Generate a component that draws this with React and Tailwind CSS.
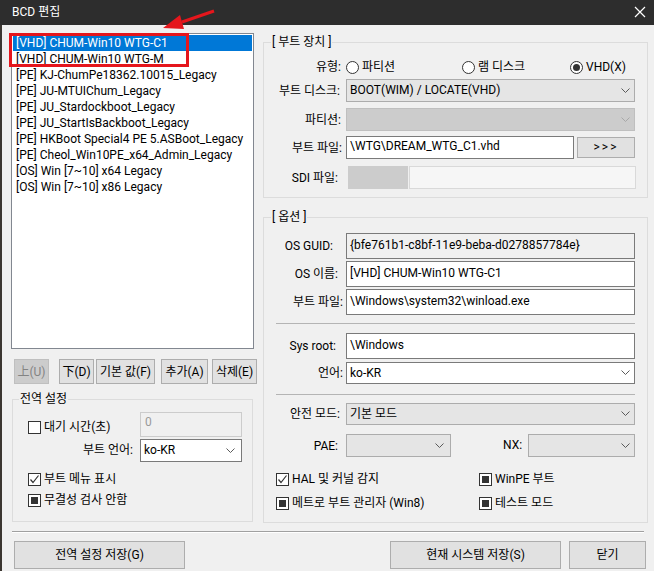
import React from 'react';

const items = [
  '[VHD] CHUM-Win10 WTG-C1',
  '[VHD] CHUM-Win10 WTG-M',
  '[PE] KJ-ChumPe18362.10015_Legacy',
  '[PE] JU-MTUIChum_Legacy',
  '[PE] JU_Stardockboot_Legacy',
  '[PE] JU_StartIsBackboot_Legacy',
  '[PE] HKBoot Special4 PE 5.ASBoot_Legacy',
  '[PE] Cheol_Win10PE_x64_Admin_Legacy',
  '[OS] Win [7~10] x64 Legacy',
  '[OS] Win [7~10] x86 Legacy',
];

function Btn({ children, className = '', disabled }) {
  return (
    <div
      className={`flex items-center justify-center border ${
        disabled ? 'bg-[#cccccc] border-[#bfbfbf] text-[#838383]' : 'bg-[#e1e1e1] border-[#adadad] text-black'
      } ${className}`}
    >
      {children}
    </div>
  );
}

function Chevron({ light }) {
  return (
    <svg width="9" height="6" viewBox="0 0 9 6" className="shrink-0">
      <polyline points="0.5,0.5 4.5,4.5 8.5,0.5" fill="none" stroke={light ? '#a8a8a8' : '#5a5a5a'} strokeWidth="1" />
    </svg>
  );
}

function Combo({ value, disabled, white, className = '', chevPad = 'pr-[4px]' }) {
  const look = disabled
    ? 'bg-[#cccccc] border-[#bfbfbf]'
    : white
    ? 'bg-white border-[#7a7a7a]'
    : 'bg-[#e5e5e5] border-[#acacac]';
  return (
    <div className={`flex items-center justify-between border pl-[3px] ${chevPad} ${look} ${className}`}>
      <span className="pb-[1px]">{value}</span>
      <Chevron light={disabled} />
    </div>
  );
}

function Edit({ value, className = '', readOnly }) {
  return (
    <div
      className={`flex items-center border pl-[3px] pb-[3px] ${
        readOnly ? 'bg-[#f0f0f0] border-[#7a7a7a]' : 'bg-white border-[#7a7a7a]'
      } ${className}`}
    >
      {value}
    </div>
  );
}

function Check({ state, label }) {
  return (
    <div className="flex items-center gap-[3px]">
      <div className="flex h-[13px] w-[13px] items-center justify-center border border-[#333333] bg-white">
        {state === 'checked' && (
          <svg width="11" height="11" viewBox="0 0 11 11">
            <polyline points="1.5,5.5 4,8.5 9.5,1.5" fill="none" stroke="#333333" strokeWidth="1.2" />
          </svg>
        )}
        {state === 'mixed' && <div className="h-[7px] w-[7px] bg-[#333333]" />}
      </div>
      <span className="pb-[1px]">{label}</span>
    </div>
  );
}

function Radio({ checked, label, className = '' }) {
  return (
    <div className={`flex items-center gap-[3px] ${className}`}>
      <div className="flex h-[13px] w-[13px] items-center justify-center rounded-full border border-[#333333] bg-white">
        {checked && <div className="h-[7px] w-[7px] rounded-full bg-[#333333]" />}
      </div>
      <span className="pb-[1px]">{label}</span>
    </div>
  );
}

function Group({ title, className = '', labelPos = 'left-[7px]', children }) {
  return (
    <div className={`relative border border-[#dcdcdc] ${className}`}>
      <span className={`absolute -top-[9px] ${labelPos} bg-[#f0f0f0] px-[1px] leading-[16px]`}>{title}</span>
      {children}
    </div>
  );
}

function Row({ label, lp, className = '', children }) {
  return (
    <div className={`flex items-center ${className}`}>
      <div className={`w-[82px] shrink-0 text-right ${lp}`}>{label}</div>
      {children}
    </div>
  );
}

export default function App() {
  return (
    <div className="relative h-[571px] w-[654px] overflow-hidden bg-[#f0f0f0] text-[12px] leading-[16px] text-black font-['Roboto','Noto_Sans_CJK_KR',sans-serif]">
      {/* title bar */}
      <div className="flex h-[25px] items-center justify-between bg-[#2d2d2d] pl-[12px] pr-[6px] text-white">
        <span className="pb-[2px]">BCD 편집</span>
        <svg width="12" height="12" viewBox="0 0 12 12" className="mb-[2px] mr-[2px]">
          <path d="M1 1 L11 11 M11 1 L1 11" stroke="#ffffff" strokeWidth="1.2" />
        </svg>
      </div>

      <div className="flex h-[546px] border-l-[2px] border-[#3b3631]">
        <div className="flex w-full flex-col">
          <div className="flex">
            {/* left column */}
            <div className="ml-[9px] flex w-[246px] flex-col pt-[8px]">
              <div className="h-[316px] w-[243px] border border-[#828790] bg-white p-[1px]">
                {items.map((t, i) => (
                  <div
                    key={t}
                    className={`h-[16px] whitespace-nowrap pl-[3px] ${i === 0 ? 'bg-[#0078d7] text-white' : ''}`}
                  >
                    {t}
                  </div>
                ))}
              </div>

              <div className="ml-[3px] mt-[10px] flex h-[25px]">
                <Btn disabled className="w-[35px]">上(U)</Btn>
                <Btn className="ml-[10px] w-[35px]">下(D)</Btn>
                <Btn className="ml-[2px] w-[59px]">기본 값(F)</Btn>
                <Btn className="ml-[6px] w-[47px]">추가(A)</Btn>
                <Btn className="ml-[4px] w-[45px]">삭제(E)</Btn>
              </div>

              <Group title="전역 설정" className="ml-[1px] mt-[15px] h-[123px] w-[241px]" labelPos="left-[6px]">
                <div className="flex flex-col pl-[15px] pr-[10px] pt-[12px]">
                  <div className="flex items-end justify-between">
                    <div className="pb-[1px]">
                      <Check state="none" label="대기 시간(초)" />
                    </div>
                    <div className="flex h-[25px] w-[102px] items-start border border-[#cccccc] bg-[#f0f0f0] pl-[4px] pt-[1px] text-[#9a9a9a]">
                      0
                    </div>
                  </div>
                  <div className="mt-[2px] flex items-center justify-end">
                    <span className="mr-[7px] pb-[1px]">부트 언어:</span>
                    <Combo white value="ko-KR" className="h-[23px] w-[102px]" chevPad="pr-[6px]" />
                  </div>
                  <div className="mt-[7px] flex h-[20px] items-center">
                    <Check state="checked" label="부트 메뉴 표시" />
                  </div>
                  <div className="mt-[1px] flex h-[20px] items-center">
                    <Check state="mixed" label="무결성 검사 안함" />
                  </div>
                </div>
              </Group>
            </div>

            {/* right column */}
            <div className="ml-[6px] flex w-[385px] flex-col">
              <Group title="[ 부트 장치 ]" className="mt-[17px] h-[156px] w-[385px]">
                <div className="flex flex-col pt-[14px]">
                  <Row label="유형:" lp="pr-[5px]" className="h-[20px]">
                    <Radio label="파티션" className="w-[116px]" />
                    <Radio label="램 디스크" className="w-[108px]" />
                    <Radio checked label="VHD(X)" />
                  </Row>
                  <Row label="부트 디스크:" lp="pr-[6px]" className="mt-[2px]">
                    <Combo value="BOOT(WIM) / LOCATE(VHD)" className="h-[23px] w-[289px]" />
                  </Row>
                  <Row label="파티션:" lp="pr-[5px]" className="mt-[6px]">
                    <Combo disabled value="" className="h-[23px] w-[289px]" />
                  </Row>
                  <Row label="부트 파일:" lp="pr-[4px]" className="mt-[5px]">
                    <Edit value="\WTG\DREAM_WTG_C1.vhd" className="h-[23px] w-[228px]" />
                    <Btn className="ml-[3px] h-[21px] w-[58px] pb-[2px] tracking-[2px]">&gt;&gt;&gt;</Btn>
                  </Row>
                  <Row label="SDI 파일:" lp="pr-[8px]" className="mt-[7px]">
                    <div className="ml-[2px] h-[23px] w-[60px] bg-[#cccccc]" />
                    <div className="ml-[1px] h-[23px] w-[227px] border border-[#d9d9d9] bg-[#f6f6f6]" />
                  </Row>
                </div>
              </Group>

              <Group title="[ 옵션 ]" className="mt-[19px] h-[306px] w-[385px]">
                <div className="flex flex-col pt-[15px]">
                  <Row label="OS GUID:" lp="pr-[13px]">
                    <Edit readOnly value="{bfe761b1-c8bf-11e9-beba-d0278857784e}" className="h-[26px] w-[289px]" />
                  </Row>
                  <Row label="OS 이름:" lp="pr-[8px]" className="mt-[2px]">
                    <Edit value="[VHD] CHUM-Win10 WTG-C1" className="h-[26px] w-[289px]" />
                  </Row>
                  <Row label="부트 파일:" lp="pr-[3px]" className="mt-[2px]">
                    <Edit value="\Windows\system32\winload.exe" className="h-[26px] w-[289px]" />
                  </Row>
                  <div className="ml-[12px] mt-[8px] h-px w-[359px] bg-[#b4b4b4]" />
                  <Row label="Sys root:" lp="pr-[10px]" className="mt-[9px]">
                    <Edit value="\Windows" className="h-[26px] w-[289px]" />
                  </Row>
                  <Row label="언어:" lp="pr-[3px]" className="mt-[3px]">
                    <Combo white value="ko-KR" className="h-[22px] w-[289px]" />
                  </Row>
                  <div className="ml-[12px] mt-[10px] h-px w-[359px] bg-[#b4b4b4]" />
                  <Row label="안전 모드:" lp="pr-[6px]" className="mt-[8px]">
                    <Combo value="기본 모드" className="h-[22px] w-[289px]" />
                  </Row>
                  <Row label="PAE:" lp="pr-[8px]" className="mt-[9px]">
                    <Combo value="" className="h-[23px] w-[105px]" chevPad="pr-[6px]" />
                    <span className="ml-[52px] w-[22px] pb-[1px]">NX:</span>
                    <Combo value="" className="ml-[3px] h-[23px] w-[107px]" />
                  </Row>
                  <div className="ml-[12px] mt-[12px] flex h-[20px] items-center">
                    <div className="w-[203px]">
                      <Check state="checked" label="HAL 및 커널 감지" />
                    </div>
                    <Check state="mixed" label="WinPE 부트" />
                  </div>
                  <div className="ml-[12px] mt-[4px] flex h-[20px] items-center">
                    <div className="w-[203px]">
                      <Check state="mixed" label="메트로 부트 관리자 (Win8)" />
                    </div>
                    <Check state="mixed" label="테스트 모드" />
                  </div>
                </div>
              </Group>
            </div>
          </div>

          {/* bottom separator + buttons */}
          <div className="ml-[10px] mt-[8px] h-px w-[632px] bg-[#a0a0a0]" />
          <div className="ml-[10px] h-px w-[632px] bg-white" />
          <div className="mt-[8px] flex h-[28px]">
            <Btn className="ml-[12px] w-[171px]">전역 설정 저장(G)</Btn>
            <div className="flex-1" />
            <Btn className="w-[171px]">현재 시스템 저장(S)</Btn>
            <Btn className="ml-[8px] mr-[8px] w-[77px]">닫기</Btn>
          </div>
        </div>
      </div>

      {/* red highlight frame */}
      <div className="pointer-events-none absolute left-[9px] top-[33px] h-[34px] w-[180px] border-[3px] border-[#e5161c]" />

      {/* red arrow */}
      <svg className="pointer-events-none absolute left-0 top-0" width="240" height="40" viewBox="0 0 240 40">
        <line x1="182" y1="22" x2="214" y2="11" stroke="#e5161c" strokeWidth="3" />
        <polygon points="163,28 184,29 180,15" fill="#e5161c" />
      </svg>
    </div>
  );
}
